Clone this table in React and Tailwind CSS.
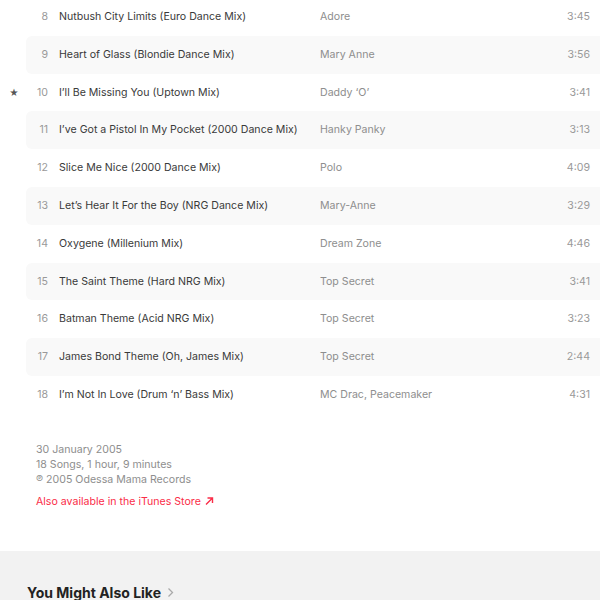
import React from "react";

const tracks = [
  { n: 8, title: "Nutbush City Limits (Euro Dance Mix)", artist: "Adore", time: "3:45" },
  { n: 9, title: "Heart of Glass (Blondie Dance Mix)", artist: "Mary Anne", time: "3:56" },
  { n: 10, title: "I’ll Be Missing You (Uptown Mix)", artist: "Daddy ‘O’", time: "3:41", star: true },
  { n: 11, title: "I’ve Got a Pistol In My Pocket (2000 Dance Mix)", artist: "Hanky Panky", time: "3:13" },
  { n: 12, title: "Slice Me Nice (2000 Dance Mix)", artist: "Polo", time: "4:09" },
  { n: 13, title: "Let’s Hear It For the Boy (NRG Dance Mix)", artist: "Mary-Anne", time: "3:29" },
  { n: 14, title: "Oxygene (Millenium Mix)", artist: "Dream Zone", time: "4:46" },
  { n: 15, title: "The Saint Theme (Hard NRG Mix)", artist: "Top Secret", time: "3:41" },
  { n: 16, title: "Batman Theme (Acid NRG Mix)", artist: "Top Secret", time: "3:23" },
  { n: 17, title: "James Bond Theme (Oh, James Mix)", artist: "Top Secret", time: "2:44" },
  { n: 18, title: "I’m Not In Love (Drum ‘n’ Bass Mix)", artist: "MC Drac, Peacemaker", time: "4:31" },
];

const TrackRow = ({ track, striped }) => (
  <div className="flex items-center h-[37.8px]">
    <div className="w-[26px] flex justify-center text-[9px] text-[#555] pl-[2px]">
      {track.star ? "★" : ""}
    </div>
    <div
      className={`flex-1 flex items-center h-full rounded-l-[6px] text-[10.6px] ${
        striped ? "bg-[#f9f9f9]" : ""
      }`}
    >
      <div className="w-[22px] text-right text-[#999]">{track.n}</div>
      <div className="w-[272px] pl-[11px] pr-[8px] text-[#3a3a3a] truncate">{track.title}</div>
      <div className="flex-1 text-[#8e8e8e]">{track.artist}</div>
      <div className="pr-[10px] text-[#999]">{track.time}</div>
    </div>
  </div>
);

export default function App() {
  return (
    <div className="w-[600px] h-[600px] overflow-hidden bg-white font-['Inter',sans-serif]">
      <div className="-mt-[2px]">
        {tracks.map((t, i) => (
          <TrackRow key={t.n} track={t} striped={i % 2 === 1} />
        ))}
      </div>

      {/* Album info */}
      <div className="pl-[36px] pt-[28px] text-[10.6px] leading-[15px] text-[#8e8e8e]">
        <p>30 January 2005</p>
        <p>18 Songs, 1 hour, 9 minutes</p>
        <p>℗ 2005 Odessa Mama Records</p>
        <p className="mt-[7px] text-[#fa2d48] flex items-center gap-[3px]">
          Also available in the iTunes Store
          <svg width="10" height="10" viewBox="0 0 10 10" fill="none" stroke="#fa2d48" strokeWidth="1.4">
            <path d="M2 8.5 L8.5 2 M3.5 2 H8.5 V7" />
          </svg>
        </p>
      </div>

      {/* You Might Also Like */}
      <div className="mt-[42px] bg-[#f2f2f2] h-[60px] pt-[33px] pl-[27px]">
        <div className="flex items-center gap-[6px]">
          <h2 className="text-[14px] font-bold text-[#222] leading-[18px]">You Might Also Like</h2>
          <svg width="7" height="11" viewBox="0 0 7 11" fill="none" stroke="#aaa" strokeWidth="1.3">
            <path d="M1.5 1.5 L5.5 5.5 L1.5 9.5" />
          </svg>
        </div>
      </div>
    </div>
  );
}
